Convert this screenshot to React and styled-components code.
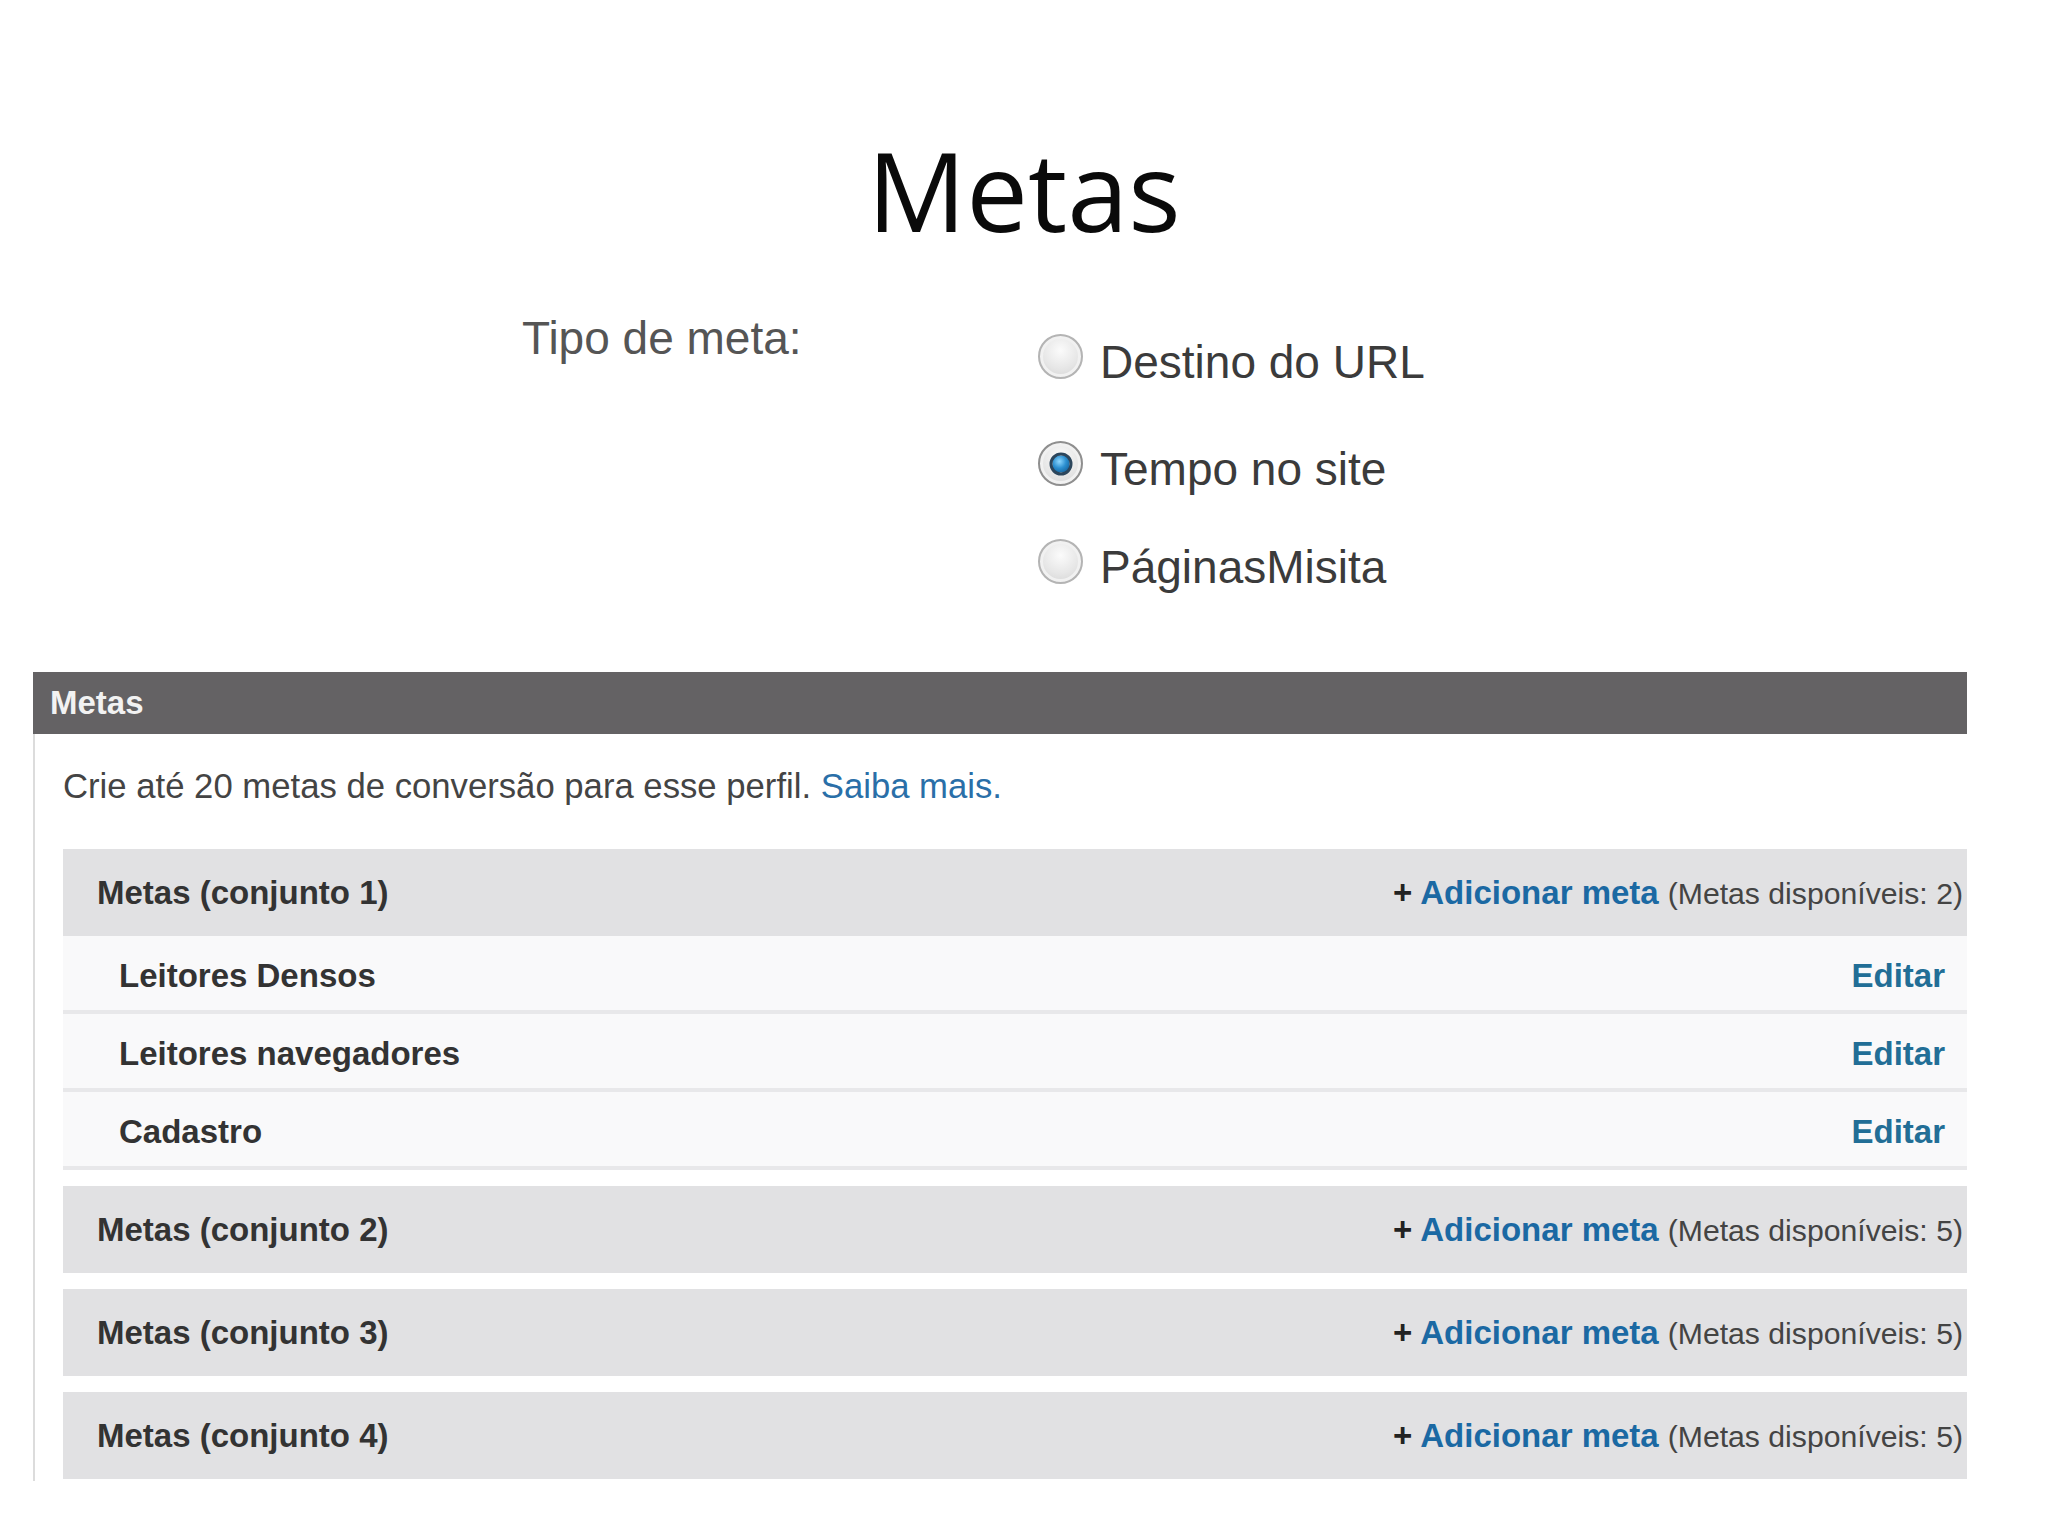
import styled, { createGlobalStyle } from 'styled-components'

const GlobalStyle = createGlobalStyle`
 html, body {
  margin: 0;
  padding: 0;
  background: #ffffff;
 }
 body {
  font-family: "Liberation Sans", Arial, sans-serif;
  color: #333;
 }
`

const Page = styled.div`
 width: 2048px;
 min-height: 1536px;
 box-sizing: border-box;
 padding-top: 129px;
`

const Title = styled.h1`
 margin: 0;
 font-family: "Open Sans", "Noto Sans", sans-serif;
 font-weight: 400;
 font-size: 110px;
 line-height: 120px;
 text-align: center;
 color: #0a0a0a;
`

const TypeSection = styled.div`
 display: grid;
 grid-template-columns: 516px auto;
 margin-top: 59px;
 padding-left: 522px;
`

const TypeLabel = styled.div`
 font-size: 46px;
 line-height: 60px;
 color: #555;
`

const Options = styled.div`
 display: flex;
 flex-direction: column;
 gap: 38px;
 padding-top: 24px;
`

const Option = styled.label`
 display: flex;
 align-items: flex-start;
 gap: 17px;
 font-size: 46px;
 line-height: 60px;
 color: #3b3b3b;

 &:first-child {
  margin-bottom: 9px;
 }
`

const Radio = styled.span`
 position: relative;
 flex: none;
 width: 41px;
 height: 41px;
 margin-top: 2px;
 border-radius: 50%;
 border: 2px solid ${(p) => (p.$checked ? '#8f8f8f' : '#b4b4b4')};
 background: radial-gradient(circle at 50% 35%, #fbfbfb 0%, #e6e6e6 55%, #cfcfcf 100%);
 box-shadow: inset 0 0 0 3px #f1f1f1;

 &::after {
  content: '';
  display: ${(p) => (p.$checked ? 'block' : 'none')};
  position: absolute;
  left: 50%;
  top: 50%;
  width: 17px;
  height: 17px;
  transform: translate(-50%, -50%);
  border-radius: 50%;
  border: 3px solid #2c465c;
  background: radial-gradient(circle at 40% 35%, #8fd8ff 0%, #2b8fd0 45%, #0c4f86 100%);
 }
`

const Panel = styled.section`
 margin: 75px 81px 0 33px;
`

const PanelHeader = styled.div`
 height: 62px;
 padding-left: 17px;
 background: #646264;
 color: #f2f2f2;
 font-weight: 700;
 font-size: 33px;
 line-height: 62px;
`

const PanelBody = styled.div`
 border-left: 2px solid #dcdcdc;
 padding: 32px 0 2px 28px;
 background: #fff;
`

const Intro = styled.p`
 margin: 0 0 43px;
 font-size: 34.7px;
 line-height: 40px;
 color: #444;
`

const Link = styled.a`
 color: ${(p) => p.$color || '#2a6fa8'};
 font-weight: ${(p) => (p.$bold ? 700 : 400)};
 text-decoration: none;
 cursor: pointer;
`

const Groups = styled.div`
 display: flex;
 flex-direction: column;
 gap: 16px;
`

const GroupHeader = styled.div`
 display: flex;
 justify-content: space-between;
 align-items: center;
 height: 87px;
 padding: 0 4px 0 34px;
 background: #e1e1e3;
`

const GroupTitle = styled.span`
 font-weight: 700;
 font-size: 33px;
 color: #333;
`

const AddMeta = styled.span`
 font-size: 33px;
 white-space: nowrap;
 color: #333;
`

const Plus = styled.b`
 margin-right: 8px;
 color: #222;
`

const Available = styled.span`
 margin-left: 9px;
 font-size: 30.2px;
 color: #444;
`

const Row = styled.div`
 display: flex;
 justify-content: space-between;
 padding: 6px 22px 0 56px;
 line-height: 68px;
 background: #f9f9fa;
 border-bottom: 4px solid #e8e8ea;
 font-weight: 700;
 font-size: 33px;
 color: #333;
`

const options = [
 { label: 'Destino do URL', checked: false },
 { label: 'Tempo no site', checked: true },
 { label: 'PáginasMisita', checked: false },
]

const groups = [
 { name: 'Metas (conjunto 1)', free: 2, goals: ['Leitores Densos', 'Leitores navegadores', 'Cadastro'] },
 { name: 'Metas (conjunto 2)', free: 5, goals: [] },
 { name: 'Metas (conjunto 3)', free: 5, goals: [] },
 { name: 'Metas (conjunto 4)', free: 5, goals: [] },
]

function Group({ name, free, goals }) {
 return (
  <div>
   <GroupHeader>
    <GroupTitle>{name}</GroupTitle>
    <AddMeta>
     <Plus>+</Plus>
     <Link $bold $color="#1b69a3">Adicionar meta</Link>
     <Available>(Metas disponíveis: {free})</Available>
    </AddMeta>
   </GroupHeader>
   {goals.map((g) => (
    <Row key={g}>
     <span>{g}</span>
     <Link $bold $color="#226e96">Editar</Link>
    </Row>
   ))}
  </div>
 )
}

export default function App() {
 return (
  <>
   <GlobalStyle />
   <Page>
    <Title>Metas</Title>
    <TypeSection>
     <TypeLabel>Tipo de meta:</TypeLabel>
     <Options>
      {options.map((o) => (
       <Option key={o.label}>
        <Radio $checked={o.checked} />
        {o.label}
       </Option>
      ))}
     </Options>
    </TypeSection>
    <Panel>
     <PanelHeader>Metas</PanelHeader>
     <PanelBody>
      <Intro>
       Crie até 20 metas de conversão para esse perfil. <Link>Saiba mais.</Link>
      </Intro>
      <Groups>
       {groups.map((g) => (
        <Group key={g.name} {...g} />
       ))}
      </Groups>
     </PanelBody>
    </Panel>
   </Page>
  </>
 )
}
